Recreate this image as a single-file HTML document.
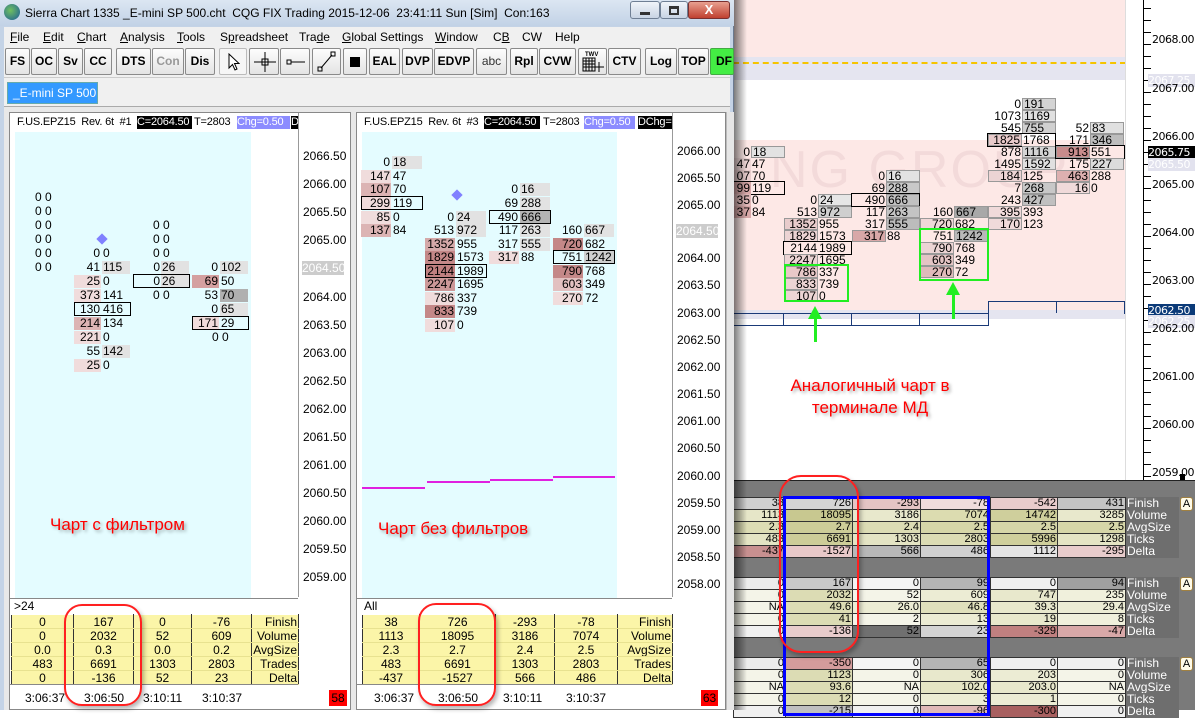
<!DOCTYPE html>
<html><head><meta charset="utf-8"><style>
*{margin:0;padding:0;box-sizing:border-box}
body{width:1195px;height:710px;position:relative;overflow:hidden;background:#fff;font-family:"Liberation Sans",sans-serif;font-size:12px;color:#000}
div{position:absolute}
.t{white-space:nowrap;height:13px;line-height:13px;font-size:12px}
.h{font-size:11px;letter-spacing:-0.2px;overflow:hidden}
.b{text-align:right;padding-right:1px}
.a{padding-left:1px}
.L1 .b{width:27px}.L1 .a{width:28px}
.L2 .b{width:30px}.L2 .a{width:30px}
.M .t{height:12px;line-height:12px;width:34px}
.M .cb{border:1px solid #999;line-height:10px}
.bx{border:1px solid #000;height:14px}
.btn{top:48px;height:27px;border:1px solid #8a8a8a;background:linear-gradient(#fdfdfd,#e4e4e4);font-weight:bold;font-size:12px;line-height:25px;text-align:center;border-radius:2px}
.mn{top:30px;font-size:12px}
.ax{font-size:12px}
.ay{font-size:11px;font-family:"DejaVu Sans",sans-serif;letter-spacing:-0.5px}
table{position:absolute;border-collapse:collapse;table-layout:fixed;font-size:11px}
td{border:1px solid #333;height:12px;line-height:11px;text-align:right;padding:0 1px;overflow:hidden;white-space:nowrap}
td.lb{background:#6e6e6e;color:#fff;text-align:left;border-color:#6e6e6e;font-size:12px}
.yt{font-size:12px}
.yt td{background:#fbf5a8;text-align:center;height:14px;line-height:12px;border-color:#fff #333 #fff #333;border-bottom:1px solid #e8e290}
.yt td.l{text-align:right}
.red{color:#f00;font-size:17px;text-shadow:2px 2px 3px rgba(0,0,0,.35)}
</style></head><body>

<div style="left:733px;top:0;width:393px;height:57px;background:#fde8e6"></div>
<div style="left:733px;top:57px;width:393px;height:23px;background:#e5e5f0"></div>
<div style="left:733px;top:62px;width:393px;height:0;border-top:2px dashed #f5c400"></div>
<div style="left:733px;top:140px;width:393px;height:170px;background:#fde8e6"></div>
<div style="left:733px;top:310px;width:393px;height:9px;background:#e5e5f0"></div>
<div style="left:1125px;top:0;width:1px;height:480px;background:#ddd"></div>
<div style="left:770px;top:140px;font-size:52px;color:#f3dada;letter-spacing:2px">NG GROUP</div>
<div style="left:1143px;top:0;width:1px;height:480px;background:#000"></div>
<div style="left:1143px;top:0;width:8px;height:480px;background:repeating-linear-gradient(#000 0 1px,transparent 1px 12px);background-position:0 8px"></div>
<div class="ay" style="left:1152px;top:33px">2068.00</div>
<div class="ay" style="left:1148px;top:74px;background:#e2e2ee;color:#fff;width:47px">2067.25</div>
<div class="ay" style="left:1152px;top:82px">2067.00</div>
<div class="ay" style="left:1152px;top:130px">2066.00</div>
<div class="ay" style="left:1148px;top:146px;background:#000;color:#fff;width:47px">2065.75</div>
<div class="ay" style="left:1148px;top:158px;background:#e2e2ee;color:#fff;width:47px">2065.50</div>
<div class="ay" style="left:1152px;top:178px">2065.00</div>
<div class="ay" style="left:1152px;top:226px">2064.00</div>
<div class="ay" style="left:1152px;top:274px">2063.00</div>
<div class="ay" style="left:1148px;top:304px;background:#0b3a78;color:#fff;width:47px">2062.50</div>
<div class="ay" style="left:1148px;top:315px;background:#e2e2ee;color:#fff;width:47px">2062.25</div>
<div class="ay" style="left:1152px;top:322px">2062.00</div>
<div class="ay" style="left:1152px;top:370px">2061.00</div>
<div class="ay" style="left:1152px;top:418px">2060.00</div>
<div class="ay" style="left:1152px;top:466px">2059.00</div>

<div class="M">
<div class="t b" style="left:717px;top:146px">0</div><div class="t a cb" style="left:751px;top:146px;background:#e2e2e2">18</div>
<div class="t b" style="left:717px;top:158px;background:#f0d8d8">47</div><div class="t a" style="left:751px;top:158px">47</div>
<div class="t b" style="left:717px;top:170px;background:#e8cccc">07</div><div class="t a" style="left:751px;top:170px">70</div>
<div class="t b" style="left:717px;top:182px;background:#d8a8a8">99</div><div class="t a" style="left:751px;top:182px">119</div>
<div style="left:730px;top:181px;width:55px;height:14px;border:1px solid #000"></div>
<div class="t b" style="left:717px;top:194px;background:#e0b8b8">35</div><div class="t a" style="left:751px;top:194px">0</div>
<div class="t b" style="left:717px;top:206px;background:#d8a8a8">37</div><div class="t a" style="left:751px;top:206px">84</div>
<div class="t b" style="left:784px;top:194px">0</div><div class="t a cb" style="left:818px;top:194px;background:#e6e6e6">24</div>
<div class="t b" style="left:784px;top:206px">513</div><div class="t a cb" style="left:818px;top:206px;background:#cfcfcf">972</div>
<div class="t b cb" style="left:784px;top:218px;background:#e8cccc">1352</div><div class="t a" style="left:818px;top:218px">955</div>
<div class="t b cb" style="left:784px;top:230px;background:#ecd4d4">1829</div><div class="t a" style="left:818px;top:230px">1573</div>
<div class="t b" style="left:784px;top:242px">2144</div><div class="t a" style="left:818px;top:242px">1989</div>
<div style="left:783px;top:241px;width:69px;height:14px;border:1px solid #000"></div>
<div class="t b cb" style="left:784px;top:254px;background:#ecd4d4">2247</div><div class="t a" style="left:818px;top:254px">1695</div>
<div class="t b cb" style="left:784px;top:266px;background:#e8c8c8">786</div><div class="t a" style="left:818px;top:266px">337</div>
<div class="t b cb" style="left:784px;top:278px;background:#ecd4d4">833</div><div class="t a" style="left:818px;top:278px">739</div>
<div class="t b cb" style="left:784px;top:290px;background:#ecd4d4">107</div><div class="t a" style="left:818px;top:290px">0</div>
<div class="t b" style="left:852px;top:170px">0</div><div class="t a cb" style="left:886px;top:170px;background:#e2e2e2">16</div>
<div class="t b" style="left:852px;top:182px">69</div><div class="t a cb" style="left:886px;top:182px;background:#c8c8c8">288</div>
<div class="t b" style="left:852px;top:194px">490</div><div class="t a cb" style="left:886px;top:194px;background:#c0c0c0">666</div>
<div style="left:851px;top:193px;width:69px;height:14px;border:1px solid #000"></div>
<div class="t b" style="left:852px;top:206px">117</div><div class="t a cb" style="left:886px;top:206px;background:#c4c4c4">263</div>
<div class="t b" style="left:852px;top:218px">317</div><div class="t a cb" style="left:886px;top:218px;background:#bcbcbc">555</div>
<div class="t b cb" style="left:852px;top:230px;background:#d8a8a8">317</div><div class="t a" style="left:886px;top:230px">88</div>
<div class="t b" style="left:920px;top:206px">160</div><div class="t a cb" style="left:954px;top:206px;background:#a8a8a8">667</div>
<div class="t b cb" style="left:920px;top:218px;background:#f0d8d8">720</div><div class="t a" style="left:954px;top:218px">682</div>
<div class="t b" style="left:920px;top:230px">751</div><div class="t a cb" style="left:954px;top:230px;background:#b8b8b8">1242</div>
<div class="t b cb" style="left:920px;top:242px;background:#ecd4d4">790</div><div class="t a" style="left:954px;top:242px">768</div>
<div class="t b cb" style="left:920px;top:254px;background:#e4c4c4">603</div><div class="t a" style="left:954px;top:254px">349</div>
<div class="t b cb" style="left:920px;top:266px;background:#e0baba">270</div><div class="t a" style="left:954px;top:266px">72</div>
<div class="t b" style="left:988px;top:98px">0</div><div class="t a cb" style="left:1022px;top:98px;background:#d4d4d4">191</div>
<div class="t b" style="left:988px;top:110px">1073</div><div class="t a cb" style="left:1022px;top:110px;background:#e0e0e0">1169</div>
<div class="t b" style="left:988px;top:122px">545</div><div class="t a cb" style="left:1022px;top:122px;background:#d0d0d0">755</div>
<div class="t b cb" style="left:988px;top:134px;background:#e8caca">1825</div><div class="t a" style="left:1022px;top:134px">1768</div>
<div style="left:987px;top:133px;width:69px;height:14px;border:1px solid #000"></div>
<div class="t b" style="left:988px;top:146px">878</div><div class="t a cb" style="left:1022px;top:146px;background:#d4d4d4">1116</div>
<div class="t b" style="left:988px;top:158px">1495</div><div class="t a cb" style="left:1022px;top:158px;background:#e0e0e0">1592</div>
<div class="t b cb" style="left:988px;top:170px;background:#ecd4d4">184</div><div class="t a" style="left:1022px;top:170px">125</div>
<div class="t b" style="left:988px;top:182px">7</div><div class="t a cb" style="left:1022px;top:182px;background:#c8c8c8">268</div>
<div class="t b" style="left:988px;top:194px">243</div><div class="t a cb" style="left:1022px;top:194px;background:#c0c0c0">427</div>
<div class="t b cb" style="left:988px;top:206px;background:#f0dada">395</div><div class="t a" style="left:1022px;top:206px">393</div>
<div class="t b cb" style="left:988px;top:218px;background:#f0dada">170</div><div class="t a" style="left:1022px;top:218px">123</div>
<div class="t b" style="left:1056px;top:122px">52</div><div class="t a cb" style="left:1090px;top:122px;background:#e0e0e0">83</div>
<div class="t b" style="left:1056px;top:134px">171</div><div class="t a cb" style="left:1090px;top:134px;background:#bdbdbd">346</div>
<div class="t b cb" style="left:1056px;top:146px;background:#c88c8c">913</div><div class="t a" style="left:1090px;top:146px">551</div>
<div style="left:1055px;top:145px;width:70px;height:14px;border:1px solid #000"></div>
<div class="t b" style="left:1056px;top:158px">175</div><div class="t a cb" style="left:1090px;top:158px;background:#dcdcdc">227</div>
<div class="t b cb" style="left:1056px;top:170px;background:#ddb0b0">463</div><div class="t a" style="left:1090px;top:170px">288</div>
<div class="t b cb" style="left:1056px;top:182px;background:#f0dada">16</div><div class="t a" style="left:1090px;top:182px">0</div>
</div>
<div style="left:988px;top:301px;width:137px;height:13px;border:1px solid #1a3a78;border-bottom:none"></div>
<div style="left:1056px;top:301px;width:1px;height:12px;background:#1a3a78"></div>
<div style="left:733px;top:313px;width:256px;height:13px;border:1px solid #1a3a78;border-left:none"></div>
<div style="left:783px;top:313px;width:1px;height:12px;background:#1a3a78"></div>
<div style="left:851px;top:313px;width:1px;height:12px;background:#1a3a78"></div>
<div style="left:919px;top:313px;width:1px;height:12px;background:#1a3a78"></div>
<div style="left:784px;top:264px;width:65px;height:38px;border:2px solid #22ee22"></div>
<div style="left:919px;top:228px;width:70px;height:53px;border:2px solid #22ee22"></div>
<div style="left:814px;top:318px;width:3px;height:24px;background:#22ee22"></div>
<div style="left:808px;top:306px;width:0;height:0;border-left:7px solid transparent;border-right:7px solid transparent;border-bottom:13px solid #22ee22"></div>
<div style="left:952px;top:294px;width:3px;height:25px;background:#22ee22"></div>
<div style="left:946px;top:282px;width:0;height:0;border-left:7px solid transparent;border-right:7px solid transparent;border-bottom:13px solid #22ee22"></div>
<div class="red" style="left:780px;top:375px;width:180px;text-align:center;line-height:22px">Аналогичный чарт в<br>терминале МД</div>
<div style="left:1180px;top:474px;width:5px;height:6px;background:#000"></div>

<div style="left:733px;top:480px;width:462px;height:230px;background:#7a7a7a"></div>
<div style="left:733px;top:480px;width:462px;height:1px;background:#222"></div>
<table style="left:733px;top:497px;width:445px">
<colgroup><col style="width:52px"><col style="width:67px"><col style="width:68px"><col style="width:70px"><col style="width:67px"><col style="width:68px"><col style="width:53px"></colgroup>
<tr><td style="background:#d0d0d0">38</td><td style="background:#d4d4d4">726</td><td style="background:#e4c4c4">-293</td><td style="background:#f0dcdc">-78</td><td style="background:#e8cccc">-542</td><td style="background:#c4c4c4">431</td><td class="lb">Finish</td></tr>
<tr><td style="background:#e6e6c8">1113</td><td style="background:#c8c890">18095</td><td style="background:#e8e8cc">3186</td><td style="background:#dcdcb0">7074</td><td style="background:#cfcf9c">14742</td><td style="background:#e8e8cc">3285</td><td class="lb">Volume</td></tr>
<tr><td style="background:#dcdcb4">2.3</td><td style="background:#cdcd98">2.7</td><td style="background:#dcdcb4">2.4</td><td style="background:#d6d6a8">2.5</td><td style="background:#d6d6a8">2.5</td><td style="background:#d6d6a8">2.5</td><td class="lb">AvgSize</td></tr>
<tr><td style="background:#e4e4c4">483</td><td style="background:#cdcd98">6691</td><td style="background:#e4e4c4">1303</td><td style="background:#dcdcb4">2803</td><td style="background:#cfcf9c">5996</td><td style="background:#e4e4c4">1298</td><td class="lb">Ticks</td></tr>
<tr><td style="background:#c89090">-437</td><td style="background:#e8c8c8">-1527</td><td style="background:#b8b8b8">566</td><td style="background:#d0d0d0">486</td><td style="background:#e4e4e4">1112</td><td style="background:#e8cccc">-295</td><td class="lb">Delta</td></tr>
</table>
<table style="left:733px;top:577px;width:445px">
<colgroup><col style="width:52px"><col style="width:67px"><col style="width:68px"><col style="width:70px"><col style="width:67px"><col style="width:68px"><col style="width:53px"></colgroup>
<tr><td style="background:#ececec">0</td><td style="background:#c8c8c8">167</td><td style="background:#f4f4f4">0</td><td style="background:#b4b4b4">99</td><td style="background:#f0f0f0">0</td><td style="background:#a0a0a0">94</td><td class="lb">Finish</td></tr>
<tr><td style="background:#f4f4e8">0</td><td style="background:#dcdcb4">2032</td><td style="background:#f4f4e8">52</td><td style="background:#ececd4">609</td><td style="background:#e8e8cc">747</td><td style="background:#f0f0dc">235</td><td class="lb">Volume</td></tr>
<tr><td style="background:#f4f4e8">NA</td><td style="background:#dcdcb4">49.6</td><td style="background:#ececd4">26.0</td><td style="background:#e0e0bc">46.8</td><td style="background:#e8e8cc">39.3</td><td style="background:#ececd4">29.4</td><td class="lb">AvgSize</td></tr>
<tr><td style="background:#f4f4e8">0</td><td style="background:#dcdcb4">41</td><td style="background:#f4f4e8">2</td><td style="background:#ececd4">13</td><td style="background:#e8e8cc">19</td><td style="background:#f0f0dc">8</td><td class="lb">Ticks</td></tr>
<tr><td style="background:#f0f0f0">0</td><td style="background:#e8cccc">-136</td><td style="background:#707070">52</td><td style="background:#d4d4d4">23</td><td style="background:#c08080">-329</td><td style="background:#d8a8a8">-47</td><td class="lb">Delta</td></tr>
</table>
<table style="left:733px;top:657px;width:445px">
<colgroup><col style="width:52px"><col style="width:67px"><col style="width:68px"><col style="width:70px"><col style="width:67px"><col style="width:68px"><col style="width:53px"></colgroup>
<tr><td style="background:#ececec">0</td><td style="background:#d49c9c">-350</td><td style="background:#f4f4f4">0</td><td style="background:#b4b4b4">65</td><td style="background:#f0f0f0">0</td><td style="background:#f0f0f0">0</td><td class="lb">Finish</td></tr>
<tr><td style="background:#f4f4e8">0</td><td style="background:#dcdcb4">1123</td><td style="background:#f4f4e8">0</td><td style="background:#e8e8cc">306</td><td style="background:#ececd4">203</td><td style="background:#f4f4e8">0</td><td class="lb">Volume</td></tr>
<tr><td style="background:#f4f4e8">NA</td><td style="background:#dcdcb4">93.6</td><td style="background:#f4f4e8">NA</td><td style="background:#e4e4c4">102.0</td><td style="background:#e8e8cc">203.0</td><td style="background:#f4f4e8">NA</td><td class="lb">AvgSize</td></tr>
<tr><td style="background:#f4f4e8">0</td><td style="background:#dcdcb4">12</td><td style="background:#f4f4e8">0</td><td style="background:#ececd4">3</td><td style="background:#ececd4">1</td><td style="background:#f4f4e8">0</td><td class="lb">Ticks</td></tr>
<tr><td style="background:#f0f0f0">0</td><td style="background:#c0c0c0">-215</td><td style="background:#f0f0f0">0</td><td style="background:#e0b8b8">-96</td><td style="background:#a86060">-300</td><td style="background:#f0f0f0">0</td><td class="lb">Delta</td></tr>
</table>
<div style="left:1180px;top:497px;width:13px;height:14px;border:1px solid #a08040;border-radius:3px;background:#fffbe8;font-size:11px;text-align:center;line-height:12px">A</div>
<div style="left:1180px;top:577px;width:13px;height:14px;border:1px solid #a08040;border-radius:3px;background:#fffbe8;font-size:11px;text-align:center;line-height:12px">A</div>
<div style="left:1180px;top:657px;width:13px;height:14px;border:1px solid #a08040;border-radius:3px;background:#fffbe8;font-size:11px;text-align:center;line-height:12px">A</div>
<div style="left:783px;top:496px;width:207px;height:220px;border:3px solid #0000ff"></div>
<div style="left:779px;top:475px;width:80px;height:178px;border:2px solid #ff2020;border-radius:22px;box-shadow:2px 3px 5px rgba(0,0,0,.3)"></div>

<div style="left:733px;top:0;width:14px;height:710px;background:linear-gradient(90deg,rgba(0,0,0,.55),rgba(0,0,0,0))"></div>
<div style="left:0;top:0;width:734px;height:710px;background:#c4d3e6;border-right:1px solid #6a7a90"></div>
<div style="left:0;top:0;width:734px;height:26px;background:linear-gradient(#dce6f2,#c2d2e6)"></div>
<div style="left:4px;top:4px;width:16px;height:16px;border-radius:50%;background:radial-gradient(circle at 40% 40%,#6fc060,#1a5a9a)"></div>
<div style="left:25px;top:6px;font-size:12px;white-space:nowrap">Sierra Chart 1335 _E-mini SP 500.cht&nbsp; CQG FIX Trading 2015-12-06&nbsp; 23:41:11 Sun [Sim]&nbsp; Con:163</div>
<div style="left:630px;top:1px;width:30px;height:18px;border:1px solid #6f7f94;border-radius:3px;background:linear-gradient(#f0f4f9,#c8d4e4)"><div style="left:9px;top:10px;width:10px;height:3px;background:#333"></div></div>
<div style="left:660px;top:1px;width:28px;height:18px;border:1px solid #6f7f94;border-radius:3px;background:linear-gradient(#f0f4f9,#c8d4e4)"><div style="left:8px;top:4px;width:10px;height:9px;border:2px solid #333;border-top-width:3px"></div></div>
<div style="left:688px;top:1px;width:42px;height:18px;border:1px solid #7a3030;border-radius:3px;background:linear-gradient(#e8a090,#c04030);color:#fff;font-weight:bold;text-align:center;font-size:13px;line-height:16px">X</div>
<div style="left:4px;top:27px;width:726px;height:20px;background:#f0f0f0"></div>
<div class="mn" style="left:10px"><u>F</u>ile</div>
<div class="mn" style="left:43px"><u>E</u>dit</div>
<div class="mn" style="left:77px"><u>C</u>hart</div>
<div class="mn" style="left:120px"><u>A</u>nalysis</div>
<div class="mn" style="left:177px"><u>T</u>ools</div>
<div class="mn" style="left:220px">S<u>p</u>readsheet</div>
<div class="mn" style="left:299px">Tra<u>d</u>e</div>
<div class="mn" style="left:342px"><u>G</u>lobal Settings</div>
<div class="mn" style="left:435px"><u>W</u>indow</div>
<div class="mn" style="left:493px">C<u>B</u></div>
<div class="mn" style="left:522px">CW</div>
<div class="mn" style="left:555px">Help</div>
<div style="left:4px;top:47px;width:726px;height:30px;background:#f0f0f0"></div>
<div class="btn" style="left:5px;width:25px">FS</div>
<div class="btn" style="left:31px;width:26px">OC</div>
<div class="btn" style="left:58px;width:25px">Sv</div>
<div class="btn" style="left:84px;width:28px">CC</div>
<div class="btn" style="left:116px;width:35px">DTS</div>
<div class="btn" style="left:152px;width:32px;color:#999">Con</div>
<div class="btn" style="left:185px;width:30px">Dis</div>
<div class="btn" style="left:219px;width:28px;background:#f6f6f6;border-color:#bbb"><svg style="position:absolute;left:8px;top:4px" width="12" height="18"><path d="M1 1 L1 15 L4.5 11.5 L7 17 L9 16 L6.5 10.5 L11 10.5 Z" fill="#fff" stroke="#000"/></svg></div>
<div class="btn" style="left:249px;width:30px"><svg style="position:absolute;left:4px;top:3px" width="22" height="20"><path d="M0 10H22M11 0V20" stroke="#000"/><rect x="8" y="7" width="6" height="6" fill="none" stroke="#000"/></svg></div>
<div class="btn" style="left:280px;width:30px"><svg style="position:absolute;left:5px;top:6px" width="20" height="14"><rect x="1" y="5" width="4" height="4" fill="none" stroke="#000"/><path d="M5 7H19" stroke="#000"/></svg></div>
<div class="btn" style="left:312px;width:29px"><svg style="position:absolute;left:4px;top:2px" width="20" height="22"><rect x="1" y="16" width="4" height="4" fill="none" stroke="#000"/><rect x="14" y="1" width="4" height="4" fill="none" stroke="#000"/><path d="M4 17L15 4" stroke="#000"/></svg></div>
<div class="btn" style="left:343px;width:24px"><div style="left:6px;top:8px;width:10px;height:10px;background:#000"></div></div>
<div class="btn" style="left:369px;width:31px">EAL</div>
<div class="btn" style="left:402px;width:31px">DVP</div>
<div class="btn" style="left:434px;width:40px">EDVP</div>
<div class="btn" style="left:476px;width:31px;font-weight:normal;color:#333">abc</div>
<div class="btn" style="left:510px;width:28px">Rpl</div>
<div class="btn" style="left:539px;width:37px">CVW</div>
<div class="btn" style="left:578px;width:29px"><svg style="position:absolute;left:2px;top:1px" width="24" height="24"><text x="4" y="6" font-size="6" font-family="Liberation Sans">TWV</text><rect x="2" y="8" width="12" height="13" fill="none" stroke="#000"/><path d="M2 11H14M2 14H14M2 17H14M5 8V21M8 8V21M11 8V21M14 17H23M18 12V22" stroke="#000"/></svg></div>
<div class="btn" style="left:608px;width:33px">CTV</div>
<div class="btn" style="left:645px;width:32px">Log</div>
<div class="btn" style="left:678px;width:31px">TOP</div>
<div class="btn" style="left:710px;width:24px;background:#44ee44;text-align:left;padding-left:5px;border-color:#4a4">DF</div>
<div style="left:4px;top:77px;width:726px;height:30px;background:#f0f0f0;border-top:1px solid #ccc"></div>
<div style="left:7px;top:82px;width:91px;height:22px;background:#3399ff;border:1px solid #6aa;color:#fff;font-size:12px;line-height:20px;padding-left:5px;white-space:nowrap;overflow:hidden">_E-mini SP 500</div>
<div style="left:4px;top:106px;width:726px;height:604px;background:#e8e8e8;border-top:1px solid #aaa"></div>

<div style="left:9px;top:112px;width:342px;height:598px;background:#fff;border:1px solid #888"></div>
<div style="left:15px;top:132px;width:236px;height:466px;background:#e4fcff"></div>
<div style="left:298px;top:113px;width:1px;height:484px;background:#999"></div>
<div class="t h" style="left:17px;top:116px;width:119px">F.US.EPZ15&nbsp; Rev. 6t&nbsp; #1</div>
<div class="t h" style="left:137px;top:116px;background:#000;color:#fff;width:55px">C=2064.50</div>
<div class="t h" style="left:194px;top:116px;width:42px">T=2803</div>
<div class="t h" style="left:237px;top:116px;background:#8c8cff;color:#fff;width:53px">Chg=0.50</div>
<div class="t h" style="left:291px;top:116px;background:#000;color:#fff;width:7px">D</div>
<div class="ax" style="left:303px;top:149px">2066.50</div>
<div class="ax" style="left:303px;top:177px">2066.00</div>
<div class="ax" style="left:303px;top:205px">2065.50</div>
<div class="ax" style="left:303px;top:233px">2065.00</div>
<div class="ax" style="left:302px;top:261px;background:#ccc;color:#fff;width:42px">2064.50</div>
<div class="ax" style="left:303px;top:290px">2064.00</div>
<div class="ax" style="left:303px;top:318px">2063.50</div>
<div class="ax" style="left:303px;top:346px">2063.00</div>
<div class="ax" style="left:303px;top:374px">2062.50</div>
<div class="ax" style="left:303px;top:402px">2062.00</div>
<div class="ax" style="left:303px;top:430px">2061.50</div>
<div class="ax" style="left:303px;top:458px">2061.00</div>
<div class="ax" style="left:303px;top:486px">2060.50</div>
<div class="ax" style="left:303px;top:514px">2060.00</div>
<div class="ax" style="left:303px;top:542px">2059.50</div>
<div class="ax" style="left:303px;top:570px">2059.00</div>
<div class="L1">
<div class="t" style="left:35px;top:191px">0 0</div><div class="t" style="left:35px;top:205px">0 0</div><div class="t" style="left:35px;top:219px">0 0</div><div class="t" style="left:35px;top:233px">0 0</div><div class="t" style="left:35px;top:247px">0 0</div><div class="t" style="left:35px;top:261px">0 0</div>
<div style="left:98px;top:235px;width:8px;height:8px;background:#8080ff;transform:rotate(45deg)"></div>
<div class="t b" style="left:74px;top:247px">0</div><div class="t a" style="left:102px;top:247px">0</div>
<div class="t b" style="left:74px;top:261px">41</div><div class="t a" style="left:102px;top:261px;background:#e2e2e2">115</div>
<div class="t b" style="left:74px;top:275px;background:#f0dcdc">25</div><div class="t a" style="left:102px;top:275px">0</div>
<div class="t b" style="left:74px;top:289px;background:#f0dcdc">373</div><div class="t a" style="left:102px;top:289px">141</div>
<div class="t b" style="left:74px;top:303px">130</div><div class="t a" style="left:102px;top:303px">416</div>
<div class="bx" style="left:74px;top:302px;width:57px"></div>
<div class="t b" style="left:74px;top:317px;background:#dcb4b4">214</div><div class="t a" style="left:102px;top:317px">134</div>
<div class="t b" style="left:74px;top:331px;background:#f0dcdc">221</div><div class="t a" style="left:102px;top:331px">0</div>
<div class="t b" style="left:74px;top:345px">55</div><div class="t a" style="left:102px;top:345px;background:#e2e2e2">142</div>
<div class="t b" style="left:74px;top:359px;background:#f0dcdc">25</div><div class="t a" style="left:102px;top:359px">0</div>
<div class="t" style="left:153px;top:219px">0 0</div><div class="t" style="left:153px;top:233px">0 0</div><div class="t" style="left:153px;top:247px">0 0</div>
<div class="t b" style="left:134px;top:261px">0</div><div class="t a" style="left:161px;top:261px;background:#e2e2e2">26</div>
<div class="t b" style="left:134px;top:275px">0</div><div class="t a" style="left:161px;top:275px;background:#e2e2e2">26</div>
<div class="bx" style="left:133px;top:274px;width:57px"></div>
<div class="t" style="left:153px;top:289px">0 0</div>
<div class="t b" style="left:192px;top:261px">0</div><div class="t a" style="left:220px;top:261px;background:#e2e2e2">102</div>
<div class="t b" style="left:192px;top:275px;background:#d4a0a0">69</div><div class="t a" style="left:220px;top:275px">50</div>
<div class="t b" style="left:192px;top:289px">53</div><div class="t a" style="left:220px;top:289px;background:#b0b0b0">70</div>
<div class="t b" style="left:192px;top:303px">0</div><div class="t a" style="left:220px;top:303px;background:#e2e2e2">65</div>
<div class="t b" style="left:192px;top:317px;background:#f0dcdc">171</div><div class="t a" style="left:220px;top:317px">29</div>
<div class="bx" style="left:192px;top:316px;width:57px"></div>
<div class="t" style="left:212px;top:331px">0 0</div>
</div>
<div class="red" style="left:50px;top:515px">Чарт с фильтром</div>
<div style="left:10px;top:598px;width:288px;height:1px;background:#888"></div>
<div class="t" style="left:14px;top:600px">&gt;24</div>
<table class="yt" style="left:11px;top:614px;width:287px">
<colgroup><col style="width:62px"><col style="width:60px"><col style="width:58px"><col style="width:60px"><col style="width:47px"></colgroup>
<tr><td>0</td><td>167</td><td>0</td><td>-76</td><td class="l">Finish</td></tr>
<tr><td>0</td><td>2032</td><td>52</td><td>609</td><td class="l">Volume</td></tr>
<tr><td>0.0</td><td>0.3</td><td>0.0</td><td>0.2</td><td class="l">AvgSize</td></tr>
<tr><td>483</td><td>6691</td><td>1303</td><td>2803</td><td class="l">Trades</td></tr>
<tr><td>0</td><td>-136</td><td>52</td><td>23</td><td class="l">Delta</td></tr>
</table>
<div style="left:10px;top:684px;width:288px;height:1px;background:#888"></div>
<div class="t" style="left:25px;top:692px">3:06:37</div>
<div class="t" style="left:84px;top:692px">3:06:50</div>
<div class="t" style="left:143px;top:692px">3:10:11</div>
<div class="t" style="left:202px;top:692px">3:10:37</div>
<div style="left:329px;top:690px;width:18px;height:16px;background:#f00;font-size:12px;line-height:16px;text-align:center">58</div>
<div style="left:64px;top:604px;width:78px;height:102px;border:2px solid #ff2020;border-radius:18px;box-shadow:2px 3px 5px rgba(0,0,0,.3)"></div>

<div style="left:356px;top:112px;width:370px;height:598px;background:#fff;border:1px solid #888"></div>
<div style="left:362px;top:132px;width:255px;height:466px;background:#e4fcff"></div>
<div style="left:672px;top:113px;width:1px;height:484px;background:#999"></div>
<div style="left:726px;top:112px;width:8px;height:598px;background:#e6e6e6;border-left:1px solid #bbb"></div>
<div class="t h" style="left:364px;top:116px;width:119px">F.US.EPZ15&nbsp; Rev. 6t&nbsp; #3</div>
<div class="t h" style="left:484px;top:116px;background:#000;color:#fff;width:56px">C=2064.50</div>
<div class="t h" style="left:543px;top:116px;width:40px">T=2803</div>
<div class="t h" style="left:584px;top:116px;background:#8c8cff;color:#fff;width:51px">Chg=0.50</div>
<div class="t h" style="left:638px;top:116px;background:#000;color:#fff;width:34px">DChg=</div>
<div class="ax" style="left:677px;top:144px">2066.00</div>
<div class="ax" style="left:677px;top:171px">2065.50</div>
<div class="ax" style="left:677px;top:198px">2065.00</div>
<div class="ax" style="left:676px;top:224px;background:#ccc;color:#fff;width:42px">2064.50</div>
<div class="ax" style="left:677px;top:251px">2064.00</div>
<div class="ax" style="left:677px;top:278px">2063.50</div>
<div class="ax" style="left:677px;top:306px">2063.00</div>
<div class="ax" style="left:677px;top:333px">2062.50</div>
<div class="ax" style="left:677px;top:360px">2062.00</div>
<div class="ax" style="left:677px;top:387px">2061.50</div>
<div class="ax" style="left:677px;top:414px">2061.00</div>
<div class="ax" style="left:677px;top:441px">2060.50</div>
<div class="ax" style="left:677px;top:469px">2060.00</div>
<div class="ax" style="left:677px;top:496px">2059.50</div>
<div class="ax" style="left:677px;top:523px">2059.00</div>
<div class="ax" style="left:677px;top:550px">2058.50</div>
<div class="ax" style="left:677px;top:577px">2058.00</div>
<div class="L2">
<div class="t b" style="left:361px;top:156px">0</div><div class="t a" style="left:392px;top:156px;background:#e2e2e2">18</div>
<div class="t b" style="left:361px;top:170px;background:#f0dcdc">147</div><div class="t a" style="left:392px;top:170px">47</div>
<div class="t b" style="left:361px;top:183px;background:#dcb4b4">107</div><div class="t a" style="left:392px;top:183px">70</div>
<div class="t b" style="left:361px;top:197px;background:#f0dcdc">299</div><div class="t a" style="left:392px;top:197px">119</div>
<div class="bx" style="left:361px;top:196px;width:62px"></div>
<div class="t b" style="left:361px;top:211px;background:#f0dcdc">85</div><div class="t a" style="left:392px;top:211px">0</div>
<div class="t b" style="left:361px;top:224px;background:#dcb4b4">137</div><div class="t a" style="left:392px;top:224px">84</div>
<div style="left:453px;top:191px;width:8px;height:8px;background:#8080ff;transform:rotate(45deg)"></div>
<div class="t b" style="left:425px;top:211px">0</div><div class="t a" style="left:456px;top:211px;background:#e2e2e2">24</div>
<div class="t b" style="left:425px;top:224px">513</div><div class="t a" style="left:456px;top:224px;background:#e2e2e2">972</div>
<div class="t b" style="left:425px;top:238px;background:#d4a8a8">1352</div><div class="t a" style="left:456px;top:238px">955</div>
<div class="t b" style="left:425px;top:251px;background:#c48888">1829</div><div class="t a" style="left:456px;top:251px">1573</div>
<div class="t b" style="left:425px;top:265px;background:#c08080">2144</div><div class="t a" style="left:456px;top:265px">1989</div>
<div class="bx" style="left:425px;top:264px;width:62px"></div>
<div class="t b" style="left:425px;top:278px;background:#cc9898">2247</div><div class="t a" style="left:456px;top:278px">1695</div>
<div class="t b" style="left:425px;top:292px;background:#f0dcdc">786</div><div class="t a" style="left:456px;top:292px">337</div>
<div class="t b" style="left:425px;top:305px;background:#c48888">833</div><div class="t a" style="left:456px;top:305px">739</div>
<div class="t b" style="left:425px;top:319px;background:#f0dcdc">107</div><div class="t a" style="left:456px;top:319px">0</div>
<div class="t b" style="left:489px;top:183px">0</div><div class="t a" style="left:520px;top:183px;background:#e2e2e2">16</div>
<div class="t b" style="left:489px;top:197px">69</div><div class="t a" style="left:520px;top:197px;background:#e2e2e2">288</div>
<div class="t b" style="left:489px;top:211px">490</div><div class="t a" style="left:520px;top:211px;background:#b4b4b4">666</div>
<div class="bx" style="left:489px;top:210px;width:62px"></div>
<div class="t b" style="left:489px;top:224px">117</div><div class="t a" style="left:520px;top:224px;background:#e2e2e2">263</div>
<div class="t b" style="left:489px;top:238px">317</div><div class="t a" style="left:520px;top:238px;background:#e2e2e2">555</div>
<div class="t b" style="left:489px;top:251px;background:#f0dcdc">317</div><div class="t a" style="left:520px;top:251px">88</div>
<div class="t b" style="left:553px;top:224px">160</div><div class="t a" style="left:584px;top:224px;background:#e2e2e2">667</div>
<div class="t b" style="left:553px;top:238px;background:#c48888">720</div><div class="t a" style="left:584px;top:238px">682</div>
<div class="t b" style="left:553px;top:251px">751</div><div class="t a" style="left:584px;top:251px;background:#cfcfcf">1242</div>
<div class="bx" style="left:553px;top:250px;width:62px"></div>
<div class="t b" style="left:553px;top:265px;background:#c48888">790</div><div class="t a" style="left:584px;top:265px">768</div>
<div class="t b" style="left:553px;top:278px;background:#e2c0c0">603</div><div class="t a" style="left:584px;top:278px">349</div>
<div class="t b" style="left:553px;top:292px;background:#f0dcdc">270</div><div class="t a" style="left:584px;top:292px">72</div>
</div>
<div style="left:362px;top:487px;width:63px;height:2px;background:#e020e0"></div>
<div style="left:427px;top:481px;width:63px;height:2px;background:#e020e0"></div>
<div style="left:490px;top:479px;width:63px;height:2px;background:#e020e0"></div>
<div style="left:553px;top:476px;width:62px;height:2px;background:#e020e0"></div>
<div class="red" style="left:378px;top:519px">Чарт без фильтров</div>
<div style="left:357px;top:598px;width:315px;height:1px;background:#888"></div>
<div class="t" style="left:364px;top:600px">All</div>
<table class="yt" style="left:362px;top:614px;width:310px">
<colgroup><col style="width:57px"><col style="width:76px"><col style="width:59px"><col style="width:63px"><col style="width:55px"></colgroup>
<tr><td>38</td><td>726</td><td>-293</td><td>-78</td><td class="l">Finish</td></tr>
<tr><td>1113</td><td>18095</td><td>3186</td><td>7074</td><td class="l">Volume</td></tr>
<tr><td>2.3</td><td>2.7</td><td>2.4</td><td>2.5</td><td class="l">AvgSize</td></tr>
<tr><td>483</td><td>6691</td><td>1303</td><td>2803</td><td class="l">Trades</td></tr>
<tr><td>-437</td><td>-1527</td><td>566</td><td>486</td><td class="l">Delta</td></tr>
</table>
<div style="left:357px;top:684px;width:315px;height:1px;background:#888"></div>
<div class="t" style="left:374px;top:692px">3:06:37</div>
<div class="t" style="left:438px;top:692px">3:06:50</div>
<div class="t" style="left:503px;top:692px">3:10:11</div>
<div class="t" style="left:566px;top:692px">3:10:37</div>
<div style="left:701px;top:690px;width:17px;height:16px;background:#f00;font-size:12px;line-height:16px;text-align:center">63</div>
<div style="left:418px;top:603px;width:78px;height:103px;border:2px solid #ff2020;border-radius:18px;box-shadow:2px 3px 5px rgba(0,0,0,.3)"></div>
</body></html>
